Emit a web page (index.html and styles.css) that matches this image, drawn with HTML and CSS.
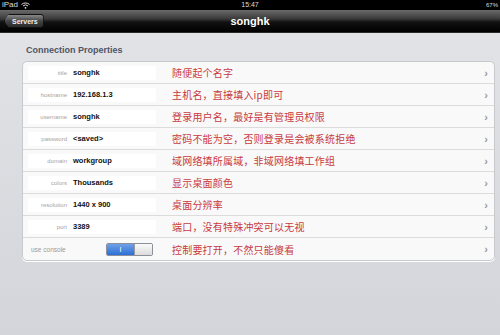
FILE: index.html
```html
<!DOCTYPE html>
<html>
<head>
<meta charset="utf-8">
<link rel="stylesheet" href="styles.css">
</head>
<body>
<div class="status">
  <div class="status-left">iPad <svg class="wifi" width="9" height="7" viewBox="0 0 9 7"><path d="M0.5 2.5 A6 6 0 0 1 8.5 2.5" stroke="#ddd" stroke-width="1" fill="none"/><path d="M2 4 A3.6 3.6 0 0 1 7 4" stroke="#ddd" stroke-width="1" fill="none"/><circle cx="4.5" cy="5.8" r="0.9" fill="#ddd"/></svg></div>
  <div class="status-time">15:47</div>
  <div class="status-right">67%</div>
</div>
<div class="nav">
  <div class="back">Servers</div>
  <div class="title">songhk</div>
</div>
<main class="content">
  <h2 class="heading">Connection Properties</h2>
  <div class="card">
    <div class="row"><div class="field"><span class="label">title</span><span class="value">songhk</span></div><span class="note">随便起个名字</span><span class="chev">›</span></div>
    <div class="row"><div class="field"><span class="label">hostname</span><span class="value">192.168.1.3</span></div><span class="note">主机名，直接填入ip即可</span><span class="chev">›</span></div>
    <div class="row"><div class="field"><span class="label">username</span><span class="value">songhk</span></div><span class="note">登录用户名，最好是有管理员权限</span><span class="chev">›</span></div>
    <div class="row"><div class="field"><span class="label">password</span><span class="value">&lt;saved&gt;</span></div><span class="note">密码不能为空，否则登录是会被系统拒绝</span><span class="chev">›</span></div>
    <div class="row"><div class="field"><span class="label">domain</span><span class="value">workgroup</span></div><span class="note">域网络填所属域，非域网络填工作组</span><span class="chev">›</span></div>
    <div class="row"><div class="field"><span class="label">colors</span><span class="value">Thousands</span></div><span class="note">显示桌面颜色</span><span class="chev">›</span></div>
    <div class="row"><div class="field"><span class="label">resolution</span><span class="value">1440 x 900</span></div><span class="note">桌面分辨率</span><span class="chev">›</span></div>
    <div class="row"><div class="field"><span class="label">port</span><span class="value">3389</span></div><span class="note">端口，没有特殊冲突可以无视</span><span class="chev">›</span></div>
    <div class="row last"><div class="field plain"><span class="label-left">use console</span><span class="toggle"><span class="on">I</span><span class="off"></span></span></div><span class="note">控制要打开，不然只能傻看</span><span class="chev">›</span></div>
  </div>
</main>
</body>
</html>
```
FILE: styles.css
```css
* { box-sizing: border-box; }
html, body { margin: 0; padding: 0; }
body {
  width: 500px;
  height: 335px;
  overflow: hidden;
  font-family: "Liberation Sans", Arial, sans-serif;
  background: linear-gradient(#e3e4e8, #d4d5da);
}
.status {
  height: 10px;
  background: #000;
  color: #ddd;
  font-size: 8px;
  line-height: 10px;
  display: flex;
  justify-content: space-between;
  padding: 0 2px 0 2px;
  position: relative;
}
.status-left { display: flex; align-items: center; gap: 3px; }
.status-time { position: absolute; left: 0; right: 0; text-align: center; font-size: 7px; }
.status-right { font-size: 6px; }
.nav {
  height: 23px;
  background: linear-gradient(#6a6a6a 0%, #3a3a3a 40%, #111 55%, #000 100%);
  border-bottom: 1px solid #2a2a2a;
  position: relative;
  display: flex;
  align-items: center;
  padding-left: 4px;
}
.back {
  height: 14px;
  padding: 0 5px 0 7px;
  font-size: 7px;
  font-weight: bold;
  color: #eee;
  line-height: 14px;
  background: linear-gradient(#8a8a8a, #444 50%, #2a2a2a);
  border: 1px solid #111;
  border-radius: 3px;
  clip-path: polygon(5px 0, 100% 0, 100% 100%, 5px 100%, 0 50%);
}
.title {
  position: absolute;
  left: 0; right: 0;
  text-align: center;
  color: #fff;
  font-weight: bold;
  font-size: 11px;
}
.content { padding: 12px 5px 0 22px; }
.heading {
  margin: 0 0 6px 4px;
  font-size: 9px;
  font-weight: bold;
  color: #4e5566;
  line-height: 10px;
}
.card {
  background: #f9f9f9;
  border: 1px solid #c8c9cc;
  border-radius: 5px;
  box-shadow: 0 1px 0 #fff;
}
.row {
  height: 22px;
  display: flex;
  align-items: center;
  border-bottom: 1px solid #dcdcdc;
  padding: 0 6px 0 5px;
}
.row.last { border-bottom: none; }
.field {
  width: 128px;
  height: 14px;
  background: #fff;
  display: flex;
  align-items: center;
  flex-shrink: 0;
}
.field.plain { background: transparent; }
.label {
  width: 39px;
  text-align: right;
  font-size: 6px;
  color: #a4a4a4;
}
.label-left {
  width: 78px;
  padding-left: 3px;
  font-size: 6.5px;
  color: #999;
}
.value {
  margin-left: 6px;
  font-size: 7.5px;
  font-weight: bold;
  color: #111;
}
.toggle {
  display: flex;
  width: 47px;
  height: 13px;
  border: 1px solid #8a8f99;
  border-radius: 2px;
  overflow: hidden;
}
.toggle .on {
  width: 27px;
  background: linear-gradient(#6fa0e8, #2c6fd6);
  color: #fff;
  font-size: 7px;
  text-align: center;
  line-height: 11px;
}
.toggle .off {
  flex: 1;
  background: linear-gradient(#fafafa, #dcdcdc);
  border-left: 1px solid #999;
}
.note {
  margin-left: 16px;
  flex: 1;
  font-family: "Noto Sans CJK SC", sans-serif;
  font-size: 10px;
  color: #c83a3e;
  letter-spacing: 0.2px;
}
.chev {
  color: #999;
  font-size: 11px;
  font-weight: bold;
  line-height: 10px;
}
```
